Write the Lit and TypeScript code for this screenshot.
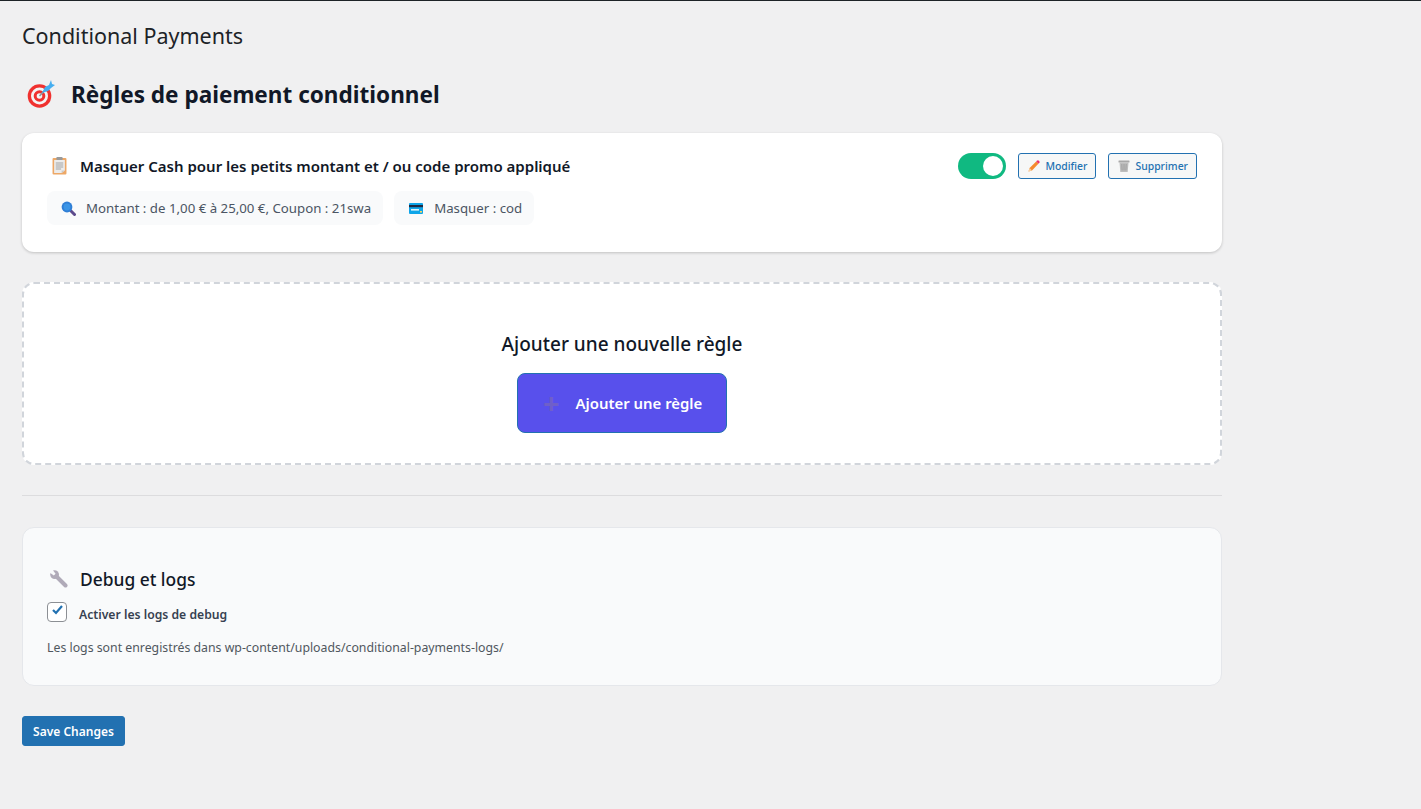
import { LitElement, html, css, svg } from 'lit';
import { customElement } from 'lit/decorators.js';

const targetIcon = svg`<svg class="ico" width="32" height="32" viewBox="0 0 32 32">
  <circle cx="15.5" cy="17" r="11.8" fill="#f0312f"/>
  <circle cx="15.5" cy="17" r="8.5" fill="#f4f4f4"/>
  <circle cx="15.5" cy="17" r="5.8" fill="#f0312f"/>
  <circle cx="15.5" cy="17" r="2.8" fill="#f4f4f4"/>
  <path d="M15.5 17L24 8" stroke="#8a97a3" stroke-width="1.6"/>
  <path d="M18 14l3-6 4-2 2-5 1 4 3 1-4 3-3 3z" fill="#45aef0"/>
</svg>`;

const clipboardIcon = svg`<svg class="ico" width="15" height="18" viewBox="0 0 14 18" preserveAspectRatio="none">
  <rect x="0.5" y="1" width="13" height="16.5" rx="1" fill="#eda867"/>
  <path d="M2 3h10v10.5L9 16H2z" fill="#ececec"/>
  <path d="M9 16v-2.5h3z" fill="#c9c9c9"/>
  <rect x="4" y="0" width="6" height="3" rx="1" fill="#9a9a9a"/>
  <path d="M3.5 6h7M3.5 8h7M3.5 10h7M3.5 12h5" stroke="#a4a4a4" stroke-width="1"/>
</svg>`;

const searchIcon = svg`<svg class="ico" width="15" height="15" viewBox="0 0 15 15">
  <path d="M9.5 9.5L13.5 13.5" stroke="#5c4a8c" stroke-width="3" stroke-linecap="round"/>
  <circle cx="6" cy="6" r="5.4" fill="#2f7fd6"/>
  <circle cx="6" cy="6" r="3.4" fill="#3b95e6"/>
</svg>`;

const cardIcon = svg`<svg class="ico" width="16" height="11" viewBox="-1 0 16 11">
  <rect x="0" y="0" width="14" height="11" rx="1" fill="#0ea5e9"/>
  <rect x="0" y="2" width="14" height="2.2" fill="#1f2a44"/>
  <rect x="2" y="6" width="8" height="1.6" fill="#dff3fb"/>
  <rect x="11" y="8" width="2" height="1.6" fill="#f6d860"/>
</svg>`;

const pencilIcon = svg`<svg class="ico" width="12" height="12" viewBox="0 0 12 12">
  <path d="M0.5 11.5L1.6 8 8.2 1.6 10.4 3.8 4 10.4z" fill="#f58a2e"/>
  <path d="M8.2 1.6L9.4 0.5a.8.8 0 0 1 1 0l1.1 1.1a.8.8 0 0 1 0 1L10.4 3.8z" fill="#ec2f6b"/>
  <path d="M0.5 11.5L1.6 8 4 10.4z" fill="#f7cfa0"/>
</svg>`;

const trashIcon = svg`<svg class="ico" width="12" height="12" viewBox="0 0 11 12">
  <rect x="0" y="0.5" width="11" height="2" rx="0.5" fill="#a8a8a8"/>
  <path d="M1 2.5h9l-.8 9.5H1.8z" fill="#bdbdbd"/>
  <path d="M3.3 4l.3 6.5M5.5 4v6.5M7.7 4l-.3 6.5" stroke="#989898" stroke-width="0.8"/>
</svg>`;

const wrenchIcon = svg`<svg class="ico wrench" width="18" height="18" viewBox="0 0 18 18">
  <path d="M5 5L15.5 15.5" stroke="#b0aab8" stroke-width="4" stroke-linecap="round"/>
  <circle cx="4.6" cy="4.6" r="4.4" fill="#b0aab8"/>
  <path d="M-1 2L3.8 5.6 5.6 3.8 2-1z" fill="#f9fafb"/>
</svg>`;

@customElement('app-root')
export class AppRoot extends LitElement {
  static styles = css`
    :host {
      display: block;
      min-height: 809px;
      box-sizing: border-box;
      background: #f0f0f1;
      border-top: 1px solid #1d2327;
      font-family: 'Noto Sans', 'Open Sans', sans-serif;
      color: #1d2327;
    }

    .wrap {
      width: 1200px;
      margin-left: 22px;
      padding-top: 19px;
    }

    .ico {
      display: block;
      flex: none;
    }

    h1 {
      margin: 0;
      font-size: 21.5px;
      line-height: 32px;
      font-weight: 400;
    }

    .page-head {
      display: flex;
      align-items: center;
      gap: 15px;
      margin: 27px 0 22px 2px;
    }

    h2 {
      margin: 0;
      font-size: 22.55px;
      line-height: 32px;
      font-weight: 700;
      color: #111827;
    }

    .rule-card {
      display: flex;
      flex-direction: column;
      height: 119px;
      box-sizing: border-box;
      padding: 20px 25px 0 25px;
      background: #fff;
      border-radius: 12px;
      box-shadow: 0 1px 3px rgba(0, 0, 0, 0.2);
    }

    .rule-top {
      display: flex;
      align-items: center;
      height: 26px;
    }

    .rule-title {
      display: flex;
      align-items: center;
      gap: 13px;
      margin-right: auto;
      padding-left: 5px;
      font-size: 15px;
      font-weight: 600;
      color: #111827;
    }

    .switch {
      width: 48px;
      height: 26px;
      box-sizing: border-box;
      padding: 3px;
      display: flex;
      justify-content: flex-end;
      background: #10b981;
      border-radius: 13px;
    }

    .switch span {
      width: 20px;
      height: 20px;
      background: #fff;
      border-radius: 50%;
    }

    .btn-small {
      display: flex;
      align-items: center;
      gap: 5px;
      height: 26px;
      box-sizing: border-box;
      padding: 0 8px 0 9px;
      margin-left: 12px;
      background: #f6f7f7;
      border: 1px solid #2271b1;
      border-radius: 3px;
      color: #2271b1;
      font-family: inherit;
      font-size: 10.4px;
      font-weight: 500;
    }

    .rule-tags {
      display: flex;
      gap: 11px;
      margin-top: 12px;
    }

    .tag {
      display: flex;
      align-items: center;
      height: 34px;
      box-sizing: border-box;
      padding: 0 12px 0 14px;
      gap: 10px;
      background: #f9fafb;
      border-radius: 8px;
      font-size: 13.25px;
      color: #4b5563;
    }

    .add-box {
      display: flex;
      flex-direction: column;
      align-items: center;
      height: 183px;
      box-sizing: border-box;
      margin-top: 30px;
      padding-top: 46px;
      background: #fff;
      border: 2px dashed #d1d5db;
      border-radius: 12px;
    }

    h3 {
      margin: 0;
      font-size: 19px;
      line-height: 28px;
      font-weight: 500;
      color: #111827;
    }

    .btn-add {
      display: flex;
      align-items: center;
      gap: 16px;
      width: 210px;
      height: 60px;
      box-sizing: border-box;
      margin-top: 15px;
      padding-left: 25px;
      background: #5850ec;
      border: 1px solid #2271b1;
      border-radius: 8px;
      color: #fff;
      font-family: inherit;
      font-size: 14.9px;
      font-weight: 600;
    }

    .plus {
      color: #6f5fc9;
      font-size: 29px;
      line-height: 24px;
      font-weight: 700;
    }

    hr {
      margin: 30px 0 31px;
      border: 0;
      border-top: 1px solid #dcdcde;
    }

    .debug {
      height: 159px;
      box-sizing: border-box;
      padding: 37px 24px 0 24px;
      background: #f9fafb;
      border: 1px solid #e5e7eb;
      border-radius: 12px;
    }

    .debug-head {
      display: flex;
      align-items: center;
      gap: 12px;
      height: 28px;
      font-size: 17.4px;
      font-weight: 500;
      color: #111827;
    }

    .wrench {
      margin-left: 3px;
    }

    .debug-check {
      display: flex;
      align-items: flex-start;
      gap: 12px;
      margin-top: 9px;
      font-size: 12.2px;
      font-weight: 600;
      color: #374151;
    }

    .debug-check span:last-child {
      margin-top: 4px;
    }

    .box {
      display: flex;
      justify-content: center;
      width: 20px;
      height: 20px;
      box-sizing: border-box;
      padding-top: 2px;
      background: #fff;
      border: 1px solid #8c8f94;
      border-radius: 4px;
    }

    .note {
      margin: 16px 0 0;
      font-size: 12.3px;
      line-height: 18px;
      color: #50575e;
    }

    .save {
      display: block;
      width: 103px;
      height: 30px;
      margin-top: 30px;
      padding: 0;
      background: #2271b1;
      border: 1px solid #2271b1;
      border-radius: 3px;
      color: #fff;
      font-family: inherit;
      font-size: 12px;
      font-weight: 600;
    }
  `;

  render() {
    return html`
      <div class="wrap">
        <h1>Conditional Payments</h1>
        <div class="page-head">
          ${targetIcon}
          <h2>Règles de paiement conditionnel</h2>
        </div>

        <div class="rule-card">
          <div class="rule-top">
            <div class="rule-title">
              ${clipboardIcon}
              <span>Masquer Cash pour les petits montant et / ou code promo appliqué</span>
            </div>
            <div class="switch"><span></span></div>
            <button class="btn-small">${pencilIcon}Modifier</button>
            <button class="btn-small">${trashIcon}Supprimer</button>
          </div>
          <div class="rule-tags">
            <div class="tag">${searchIcon}<span>Montant : de 1,00 € à 25,00 €, Coupon : 21swa</span></div>
            <div class="tag">${cardIcon}<span>Masquer : cod</span></div>
          </div>
        </div>

        <div class="add-box">
          <h3>Ajouter une nouvelle règle</h3>
          <button class="btn-add"><span class="plus">+</span>Ajouter une règle</button>
        </div>

        <hr />

        <div class="debug">
          <div class="debug-head">${wrenchIcon}<span>Debug et logs</span></div>
          <div class="debug-check">
            <span class="box">
              <svg width="11" height="10" viewBox="0 0 11 10">
                <path d="M1 5l3 3 6-7" fill="none" stroke="#2271b1" stroke-width="2.2"/>
              </svg>
            </span>
            <span>Activer les logs de debug</span>
          </div>
          <p class="note">Les logs sont enregistrés dans wp-content/uploads/conditional-payments-logs/</p>
        </div>

        <button class="save">Save Changes</button>
      </div>
    `;
  }
}
